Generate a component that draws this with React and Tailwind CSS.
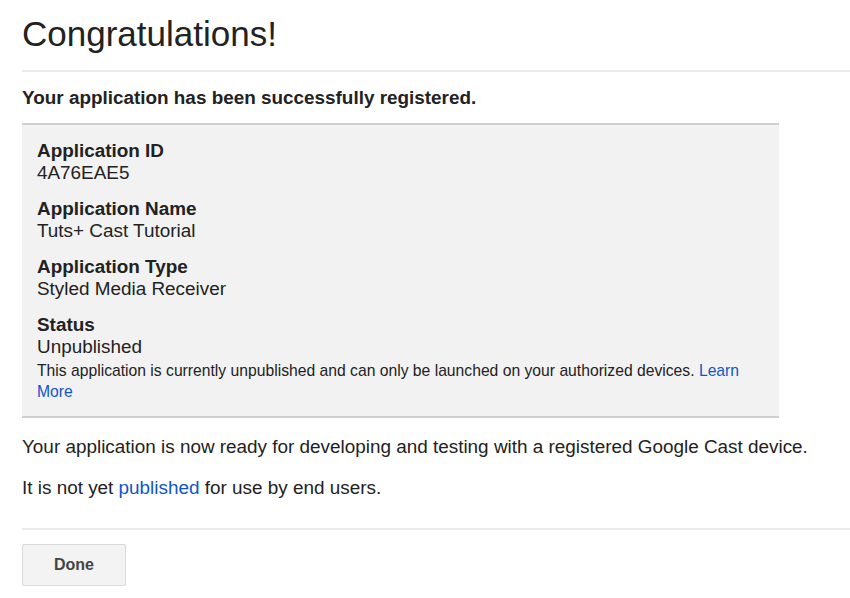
import React from 'react';

const fields = [
    { label: 'Application ID', value: '4A76EAE5' },
    { label: 'Application Name', value: 'Tuts+ Cast Tutorial' },
    { label: 'Application Type', value: 'Styled Media Receiver' },
];

export default function App() {
    return (
        <div className="min-h-screen bg-white pl-[22px] text-[#222] font-['Liberation_Sans',Arial,sans-serif]">
            <h1 className="pt-[14px] text-[35px] leading-[40px] font-normal">Congratulations!</h1>

            <div className="mt-[16px] h-[2px] bg-[#ebebeb]" />

            <p className="mt-[15px] text-[18.9px] leading-[22px] font-bold">
                Your application has been successfully registered.
            </p>

            <div className="mt-[14px] w-[757px] border-t-2 border-b-2 border-[#cfcfcf] bg-[#f2f2f2] px-[15px] pt-[15px] pb-[14px] text-[18.9px] leading-[22px]">
                {fields.map((f) => (
                    <div key={f.label} className="mb-[14px]">
                        <div className="font-bold">{f.label}</div>
                        <div>{f.value}</div>
                    </div>
                ))}
                <div>
                    <div className="font-bold">Status</div>
                    <div>Unpublished</div>
                    <p className="mt-[2px] text-[15.7px] leading-[21px]">
                        This application is currently unpublished and can only be launched on your authorized devices.{' '}
                        <a href="#" className="text-[#15c]">Learn</a>{' '}
                        <a href="#" className="text-[#15c]">More</a>
                    </p>
                </div>
            </div>

            <p className="mt-[18px] text-[18.9px] leading-[22px]">
                Your application is now ready for developing and testing with a registered Google Cast device.
            </p>
            <p className="mt-[19px] text-[18.9px] leading-[22px]">
                It is not yet <a href="#" className="text-[#15c]">published</a> for use by end users.
            </p>

            <div className="mt-[29px] h-[2px] bg-[#ebebeb]" />

            <button className="mt-[14px] h-[42px] w-[104px] rounded-[2px] border border-[#d9d9d9] bg-[#f3f3f3] text-[16px] font-bold text-[#444]">
                Done
            </button>
        </div>
    );
}
